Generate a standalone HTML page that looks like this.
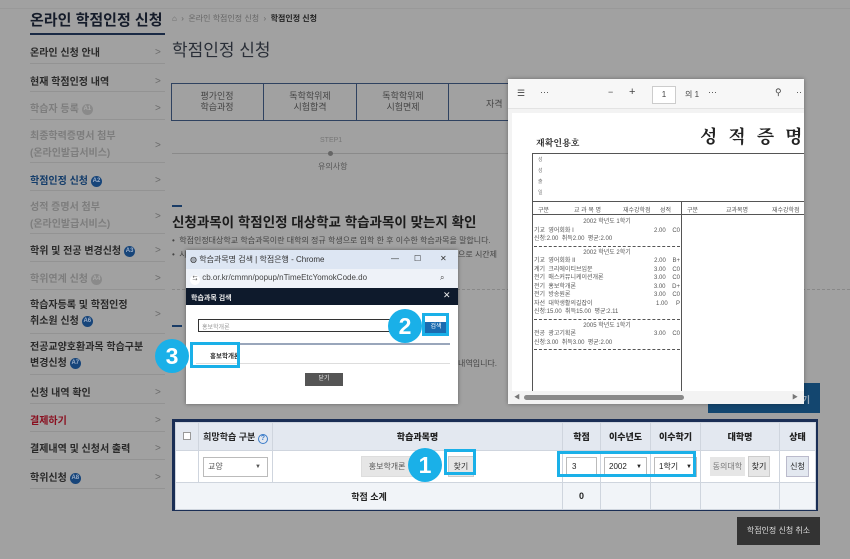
<!DOCTYPE html>
<html><head><meta charset="utf-8"><style>
*{margin:0;padding:0;box-sizing:border-box}
body{width:850px;height:559px;overflow:hidden;background:#a1a1a1;font-family:"Liberation Sans","Noto Sans CJK KR",sans-serif;color:#222;position:relative}
.a{position:absolute;white-space:nowrap}
.sb{position:absolute;left:30px;width:135px;font-size:10px;font-weight:bold;color:#2a2a2a}
.sep{position:absolute;left:30px;width:135px;height:1px;background:#939393}
.chev{position:absolute;left:155px;font-size:10px;color:#6a6a6a;margin-top:4px}
.bd{display:inline-block;width:11px;height:11px;border-radius:50%;background:#17457a;color:#9fb0c8;font-size:6px;text-align:center;line-height:11px;vertical-align:middle;margin-left:3px}
.dim{color:#7d7d7d}
.bd.g{background:#8a8a8a;color:#aaa}
.circ{position:absolute;width:34px;height:34px;border-radius:50%;background:#1ab0e8;color:#fff;font-size:23px;font-weight:bold;text-align:center;line-height:34px}
.hl{position:absolute;border:3px solid #1ab0e8}
td,th{border:1px solid #cfd5de;font-size:9px;text-align:center}
</style></head><body>
<div class="a" style="left:0;top:8px;width:850px;height:1px;background:#999"></div>
<div class="a" style="left:30px;top:9px;font-size:15px;font-weight:bold;color:#151c2a">온라인 학점인정 신청</div>
<div class="a" style="left:30px;top:33px;width:135px;height:2px;background:#1a2a45"></div>
<div class="sb" style="top:44px">온라인 신청 안내</div><div class="chev" style="top:43px">&gt;</div><div class="sep" style="top:63px"></div>
<div class="sb" style="top:73px">현재 학점인정 내역</div><div class="chev" style="top:72px">&gt;</div><div class="sep" style="top:91px"></div>
<div class="sb dim" style="top:100px">학습자 등록<span class="bd g">A1</span></div><div class="chev" style="top:99px">&gt;</div><div class="sep" style="top:119px"></div>
<div class="sb dim" style="top:128px;line-height:17px">최종학력증명서 첨부<br>(온라인발급서비스)</div><div class="chev" style="top:136px">&gt;</div><div class="sep" style="top:162px"></div>
<div class="sb" style="top:172px;color:#133c6a">학점인정 신청<span class="bd">A2</span></div><div class="chev" style="top:171px">&gt;</div><div class="sep" style="top:190px"></div>
<div class="sb dim" style="top:199px;line-height:17px">성적 증명서 첨부<br>(온라인발급서비스)</div><div class="chev" style="top:207px">&gt;</div><div class="sep" style="top:233px"></div>
<div class="sb" style="top:242px">학위 및 전공 변경신청<span class="bd">A3</span></div><div class="chev" style="top:241px">&gt;</div><div class="sep" style="top:261px"></div>
<div class="sb dim" style="top:270px">학위연계 신청<span class="bd g">A4</span></div><div class="chev" style="top:269px">&gt;</div><div class="sep" style="top:289px"></div>
<div class="sb" style="top:298px;line-height:16px">학습자등록 및 학점인정<br>취소원 신청<span class="bd">A6</span></div><div class="chev" style="top:305px">&gt;</div><div class="sep" style="top:333px"></div>
<div class="sb" style="top:340px;line-height:16px">전공교양호환과목 학습구분<br>변경신청<span class="bd">A7</span></div><div class="sep" style="top:374px"></div>
<div class="sb" style="top:384px">신청 내역 확인</div><div class="chev" style="top:383px">&gt;</div><div class="sep" style="top:403px"></div>
<div class="sb" style="top:412px;color:#8a1020">결제하기</div><div class="chev" style="top:411px">&gt;</div><div class="sep" style="top:431px"></div>
<div class="sb" style="top:440px">결제내역 및 신청서 출력</div><div class="chev" style="top:439px">&gt;</div><div class="sep" style="top:459px"></div>
<div class="sb" style="top:469px">학위신청<span class="bd">A8</span></div><div class="chev" style="top:468px">&gt;</div><div class="sep" style="top:488px"></div>
<div class="a" style="left:172px;top:13px;font-size:8px;color:#666">⌂ &nbsp;›&nbsp; 온라인 학점인정 신청 &nbsp;›&nbsp; <b style="color:#222">학점인정 신청</b></div>
<div class="a" style="left:172px;top:36px;font-size:17px;color:#2a2f38">학점인정 신청</div>
<div class="a" style="left:171px;top:83px;width:345px;height:38px;border:1px solid #2f4260"></div>
<div class="a" style="left:263px;top:83px;width:1px;height:38px;background:#2f4260"></div>
<div class="a" style="left:356px;top:83px;width:1px;height:38px;background:#2f4260"></div>
<div class="a" style="left:448px;top:83px;width:1px;height:38px;background:#2f4260"></div>
<div class="a" style="left:171px;top:91px;width:92px;text-align:center;font-size:9px;color:#444;line-height:11px">평가인정<br>학습과정</div>
<div class="a" style="left:264px;top:91px;width:92px;text-align:center;font-size:9px;color:#444;line-height:11px">독학학위제<br>시험합격</div>
<div class="a" style="left:357px;top:91px;width:92px;text-align:center;font-size:9px;color:#444;line-height:11px">독학학위제<br>시험면제</div>
<div class="a" style="left:486px;top:97px;font-size:9px;color:#444">자격</div>
<div class="a" style="left:320px;top:137px;font-size:7px;color:#777">STEP1</div>
<div class="a" style="left:172px;top:153px;width:340px;height:1px;background:#8a8a8a"></div>
<div class="a" style="left:328px;top:151px;width:5px;height:5px;border-radius:50%;background:#666"></div>
<div class="a" style="left:318px;top:161px;font-size:8px;color:#555">유의사항</div>
<div class="a" style="left:172px;top:205px;width:10px;height:2px;background:#1a3c66"></div>
<div class="a" style="left:172px;top:211px;font-size:13.5px;font-weight:bold;color:#1b1b1b">신청과목이 학점인정 대상학교 학습과목이 맞는지 확인</div>
<div class="a" style="left:172px;top:235px;font-size:8px;color:#444">• &nbsp;학점인정대상학교 학습과목이란 대학의 정규 학생으로 입학 한 후 이수한 학습과목을 말합니다.</div>
<div class="a" style="left:172px;top:249px;font-size:8px;color:#444">• &nbsp;시</div>
<div class="a" style="left:458px;top:249px;font-size:8px;color:#444">으로 시간제</div>
<div class="a" style="left:172px;top:289px;width:678px;border-top:1px dashed #888"></div>
<div class="a" style="left:172px;top:325px;width:10px;height:2px;background:#1a3c66"></div>
<div class="a" style="left:458px;top:358px;font-size:8px;color:#444">내역입니다.</div>
<div class="a" style="left:708px;top:383px;width:112px;height:30px;background:#13466f;color:#9ab;font-size:9px;font-weight:bold;text-align:right;padding:10px 10px 0 0">기</div>
<div class="a" style="left:172px;top:419px;width:646px;height:92px;border:3px solid #1a2e55;background:#fff">
<table style="border-collapse:collapse;width:640px;table-layout:fixed">
<colgroup><col style="width:23px"><col style="width:74px"><col style="width:290px"><col style="width:38px"><col style="width:50px"><col style="width:50px"><col style="width:79px"><col style="width:36px"></colgroup>
<tr style="height:28px;background:#e3e8f0;font-weight:bold"><td><span style="display:inline-block;width:8px;height:8px;border:1px solid #999;background:#fff"></span></td><td style="font-weight:bold">희망학습 구분 <span style="display:inline-block;width:10px;height:10px;border-radius:50%;border:1px solid #3a7bc8;color:#3a7bc8;font-size:7px;line-height:8px">?</span></td><td><b>학습과목명</b></td><td><b>학점</b></td><td><b>이수년도</b></td><td><b>이수학기</b></td><td><b>대학명</b></td><td><b>상태</b></td></tr>
<tr style="height:32px"><td></td><td><div style="margin:0 4px;border:1px solid #bbb;height:20px;line-height:18px;text-align:left;padding-left:4px;font-size:8px;color:#555">교양<span style="float:right;margin-right:6px;font-size:6px">▼</span></div></td>
<td><span style="display:inline-block;background:#e6e6e6;border:1px solid #ddd;padding:4px 7px;font-size:8px;color:#555;margin-right:34px">홍보학개론</span><span style="display:inline-block;background:#e6e6e6;border:1px solid #ccc;padding:4px 5px;font-size:8px;color:#333">찾기</span></td>
<td><div style="margin:0 3px;border:1px solid #bbb;height:20px;line-height:18px;text-align:left;padding-left:5px;font-size:8px">3</div></td>
<td><div style="margin:0 3px;border:1px solid #bbb;height:20px;line-height:18px;text-align:left;padding-left:4px;font-size:8px">2002<span style="float:right;margin-right:4px;font-size:6px">▼</span></div></td>
<td><div style="margin:0 3px;border:1px solid #bbb;height:20px;line-height:18px;text-align:left;padding-left:4px;font-size:8px">1학기<span style="float:right;margin-right:4px;font-size:6px">▼</span></div></td>
<td><span style="display:inline-block;background:#e6e6e6;padding:4px 3px;font-size:8px;color:#777">동의대학</span> <span style="display:inline-block;background:#e6e6e6;border:1px solid #ccc;padding:4px 3px;font-size:8px">찾기</span></td>
<td><span style="display:inline-block;background:#e3e8f0;border:1px solid #bbc;padding:4px 3px;font-size:8px">신청</span></td></tr>
<tr style="height:27px;background:#f1f4f8"><td colspan="3"><b>학점 소계</b></td><td><b>0</b></td><td></td><td></td><td></td><td></td></tr>
</table></div>
<div class="hl" style="left:444px;top:449px;width:32px;height:26px"></div>
<div class="hl" style="left:557px;top:451px;width:139px;height:26px"></div>
<div class="circ" style="left:408px;top:448px">1</div>
<div class="a" style="left:737px;top:517px;width:83px;height:28px;background:#333;color:#ddd;font-size:8px;text-align:center;line-height:28px">학점인정 신청 취소</div>
<div class="a" style="left:186px;top:250px;width:272px;height:154px;background:#fff;box-shadow:0 0 4px rgba(0,0,0,.4)">
<div class="a" style="left:0;top:0;width:272px;height:19px;background:#dde6f3;font-size:8px;color:#333;padding:4px 0 0 4px">◍ 학습과목명 검색 | 학점은행 - Chrome<span style="position:absolute;left:205px">—</span><span style="position:absolute;left:228px">☐</span><span style="position:absolute;left:254px">✕</span></div>
<div class="a" style="left:0;top:19px;width:272px;height:19px;background:#eef2f8;font-size:8px;color:#444;padding:4px 0 0 4px"><span style="display:inline-block;width:10px;height:10px;border-radius:50%;background:#fff;font-size:5px;text-align:center">⇆</span> cb.or.kr/cmmn/popup/nTimeEtcYomokCode.do<span style="position:absolute;left:254px">⌕</span></div>
<div class="a" style="left:0;top:38px;width:272px;height:17px;background:#0e1a2c;color:#eee;font-size:7px;font-weight:bold;padding:5px 0 0 5px">학습과목 검색<span style="position:absolute;left:257px;top:2px;font-size:9px;font-weight:normal">✕</span></div>
<div class="a" style="left:12px;top:69px;width:206px;height:13px;border:1px solid #333;font-size:6px;color:#999;padding:2px 3px">홍보학개론</div>
<div class="a" style="left:239px;top:72px;width:22px;height:11px;background:#1a6bb0;color:#fff;font-size:6px;text-align:center;line-height:11px">검색</div>
<div class="a" style="left:10px;top:93px;width:254px;height:2px;background:#99a6bb"></div>
<div class="a" style="left:24px;top:100px;font-size:6.5px;font-weight:bold;color:#333">홍보학개론</div>
<div class="a" style="left:10px;top:113px;width:254px;height:1px;background:#ddd"></div>
<div class="a" style="left:119px;top:123px;width:38px;height:13px;background:#555;color:#eee;font-size:6px;text-align:center;line-height:13px">닫기</div>
</div>
<div class="hl" style="left:422px;top:313px;width:27px;height:23px"></div>
<div class="hl" style="left:190px;top:342px;width:50px;height:26px"></div>
<div class="circ" style="left:388px;top:309px">2</div>
<div class="circ" style="left:155px;top:339px">3</div>
<div class="a" style="left:508px;top:79px;width:296px;height:325px;background:#f3f3f3;box-shadow:0 0 4px rgba(0,0,0,.35);overflow:hidden">
<div class="a" style="left:0;top:0;width:296px;height:30px;background:#f7f7f7;border-bottom:1px solid #e3e3e3;font-size:9px;color:#444">
<span class="a" style="left:9px;top:9px">☰</span><span class="a" style="left:32px;top:8px">···</span><span class="a" style="left:100px;top:8px">−</span><span class="a" style="left:121px;top:7px;font-size:11px">+</span>
<span class="a" style="left:144px;top:7px;width:24px;height:18px;border:1px solid #ccc;background:#fff;text-align:center;line-height:16px;font-size:8px">1</span>
<span class="a" style="left:177px;top:10px;font-size:8px">의 1</span><span class="a" style="left:200px;top:8px">···</span><span class="a" style="left:267px;top:8px">⚲</span><span class="a" style="left:288px;top:8px">··</span></div>
<div class="a" style="left:4px;top:34px;width:292px;height:280px;background:#fff;overflow:hidden">
<div class="a" style="left:188px;top:10px;font-size:18px;font-weight:bold;font-family:'Noto Serif CJK SC','Liberation Serif',serif;letter-spacing:11px">성적증명</div>
<div class="a" style="left:24px;top:23px;font-size:9px;font-weight:bold;font-family:'Noto Serif CJK SC',serif">재확인용호</div>
<div class="a" style="left:20px;top:40px;width:280px;height:250px;border-left:1px solid #555;border-top:1px solid #555"></div>
<div class="a" style="left:26px;top:42px;font-size:5px;color:#777;line-height:11px">성<br>성<br>출<br>일</div>
<div class="a" style="left:20px;top:88px;width:280px;height:14px;border-top:1px solid #555;border-bottom:1px solid #555;font-size:6px;color:#555;padding-top:3px"><span class="a" style="left:6px">구분</span><span class="a" style="left:42px">교 과 목 명</span><span class="a" style="left:91px">재수강학점</span><span class="a" style="left:128px">성적</span><span class="a" style="left:155px">구분</span><span class="a" style="left:194px">교과목명</span><span class="a" style="left:240px">재수강학점</span></div>
<div class="a" style="left:169px;top:88px;width:1px;height:200px;background:#555"></div>
<div class="a" style="left:22px;top:105px;width:146px;font-size:6px;color:#555;line-height:8.5px">
<div style="text-align:center">2002 학년도 1학기</div>
<div>기교 &nbsp;영어회화 I<span style="float:right">2.00 &nbsp;&nbsp;&nbsp;C0</span></div>
<div>신청:2.00 &nbsp;취득2.00 &nbsp;평균:2.00</div>
<div style="border-top:1px dashed #555;margin-top:2px;padding-top:2px;text-align:center">2002 학년도 2학기</div>
<div>기교 &nbsp;영어회화 II<span style="float:right">2.00 &nbsp;&nbsp;&nbsp;B+</span></div>
<div>계기 &nbsp;크리에이티브입문<span style="float:right">3.00 &nbsp;&nbsp;&nbsp;C0</span></div>
<div>전기 &nbsp;매스커뮤니케이션개론<span style="float:right">3.00 &nbsp;&nbsp;&nbsp;C0</span></div>
<div>전기 &nbsp;홍보학개론<span style="float:right">3.00 &nbsp;&nbsp;&nbsp;D+</span></div>
<div>전기 &nbsp;방송원론<span style="float:right">3.00 &nbsp;&nbsp;&nbsp;C0</span></div>
<div>자선 &nbsp;대학생활의길잡이<span style="float:right">1.00 &nbsp;&nbsp;&nbsp;&nbsp;P</span></div>
<div>신청:15.00 &nbsp;취득15.00 &nbsp;평균:2.11</div>
<div style="border-top:1px dashed #555;margin-top:2px;padding-top:2px;text-align:center">2005 학년도 1학기</div>
<div>전공 &nbsp;광고기획론<span style="float:right">3.00 &nbsp;&nbsp;&nbsp;C0</span></div>
<div>신청:3.00 &nbsp;취득3.00 &nbsp;평균:2.00</div>
<div style="border-top:1px dashed #555;margin-top:2px"></div>
</div></div>
<div class="a" style="left:0;top:312px;width:296px;height:13px;background:#f3f3f3"><span class="a" style="left:6px;top:1px;font-size:6px;color:#777">◀</span><span class="a" style="left:16px;top:4px;width:160px;height:5px;border-radius:3px;background:#8a8a8a"></span><span class="a" style="left:284px;top:1px;font-size:6px;color:#777">▶</span></div>
</div>
</body></html>
